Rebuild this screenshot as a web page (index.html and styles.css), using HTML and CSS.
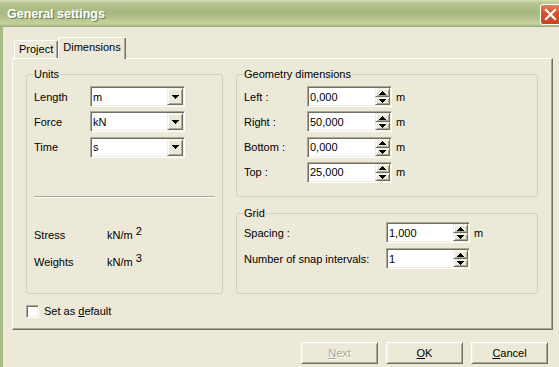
FILE: index.html
```html
<!DOCTYPE html>
<html lang="en">
<head>
    <meta charset="UTF-8">
    <meta name="viewport" content="width=device-width, initial-scale=1.0">
    <title>General settings</title>
    <link rel="stylesheet" href="styles.css">
</head>
<body>
    <div class="window">
        <!-- Title bar -->
        <div class="titlebar">
            <span class="title">General settings</span>
            <span class="close">
                <svg width="19" height="19" viewBox="0 0 19 19">
                    <path d="M5 5 L14 14 M14 5 L5 14" stroke="#fff" stroke-width="2.2" stroke-linecap="square"/>
                </svg>
            </span>
        </div>

        <div class="frame">
            <div class="content">
                <!-- Tabs -->
                <div class="tabs">
                    <div class="tab">Project</div>
                    <div class="tab active">Dimensions</div>
                </div>

                <div class="panel">
                    <div class="columns">
                        <!-- Units -->
                        <div class="group units">
                            <span class="legend">Units</span>
                            <div class="rows">
                                <div class="row">
                                    <span class="lbl lbl-units">Length</span>
                                    <div class="field combo"><span class="val">m</span><span class="btn-drop"><svg width="7" height="4"><polygon points="0,0 7,0 4,4 3,4"/></svg></span></div>
                                </div>
                                <div class="row">
                                    <span class="lbl lbl-units">Force</span>
                                    <div class="field combo"><span class="val">kN</span><span class="btn-drop"><svg width="7" height="4"><polygon points="0,0 7,0 4,4 3,4"/></svg></span></div>
                                </div>
                                <div class="row">
                                    <span class="lbl lbl-units">Time</span>
                                    <div class="field combo"><span class="val">s</span><span class="btn-drop"><svg width="7" height="4"><polygon points="0,0 7,0 4,4 3,4"/></svg></span></div>
                                </div>
                            </div>
                            <div class="sep"></div>
                            <div class="info-row first"><span class="lbl lbl-info">Stress</span><span>kN/m<sup>2</sup></span></div>
                            <div class="info-row"><span class="lbl lbl-info">Weights</span><span>kN/m<sup>3</sup></span></div>
                        </div>

                        <div class="right-col">
                            <!-- Geometry dimensions -->
                            <div class="group geometry">
                                <span class="legend">Geometry dimensions</span>
                                <div class="rows">
                                    <div class="row">
                                        <span class="lbl lbl-geo">Left :</span>
                                        <div class="field spin"><span class="val">0,000</span><span class="spin-btns"><span class="sbtn"><svg width="7" height="4"><polygon points="0,4 7,4 4,0 3,0"/></svg></span><span class="sbtn"><svg width="7" height="4"><polygon points="0,0 7,0 4,4 3,4"/></svg></span></span></div>
                                        <span class="unit">m</span>
                                    </div>
                                    <div class="row">
                                        <span class="lbl lbl-geo">Right :</span>
                                        <div class="field spin"><span class="val">50,000</span><span class="spin-btns"><span class="sbtn"><svg width="7" height="4"><polygon points="0,4 7,4 4,0 3,0"/></svg></span><span class="sbtn"><svg width="7" height="4"><polygon points="0,0 7,0 4,4 3,4"/></svg></span></span></div>
                                        <span class="unit">m</span>
                                    </div>
                                    <div class="row">
                                        <span class="lbl lbl-geo">Bottom :</span>
                                        <div class="field spin"><span class="val">0,000</span><span class="spin-btns"><span class="sbtn"><svg width="7" height="4"><polygon points="0,4 7,4 4,0 3,0"/></svg></span><span class="sbtn"><svg width="7" height="4"><polygon points="0,0 7,0 4,4 3,4"/></svg></span></span></div>
                                        <span class="unit">m</span>
                                    </div>
                                    <div class="row">
                                        <span class="lbl lbl-geo">Top :</span>
                                        <div class="field spin"><span class="val">25,000</span><span class="spin-btns"><span class="sbtn"><svg width="7" height="4"><polygon points="0,4 7,4 4,0 3,0"/></svg></span><span class="sbtn"><svg width="7" height="4"><polygon points="0,0 7,0 4,4 3,4"/></svg></span></span></div>
                                        <span class="unit">m</span>
                                    </div>
                                </div>
                            </div>

                            <!-- Grid -->
                            <div class="group grid">
                                <span class="legend">Grid</span>
                                <div class="rows grid-rows">
                                    <div class="row">
                                        <span class="lbl lbl-grid">Spacing :</span>
                                        <div class="field spin spin-grid"><span class="val">1,000</span><span class="spin-btns"><span class="sbtn"><svg width="7" height="4"><polygon points="0,4 7,4 4,0 3,0"/></svg></span><span class="sbtn"><svg width="7" height="4"><polygon points="0,0 7,0 4,4 3,4"/></svg></span></span></div>
                                        <span class="unit">m</span>
                                    </div>
                                    <div class="row">
                                        <span class="lbl lbl-grid">Number of snap intervals:</span>
                                        <div class="field spin spin-grid"><span class="val">1</span><span class="spin-btns"><span class="sbtn"><svg width="7" height="4"><polygon points="0,4 7,4 4,0 3,0"/></svg></span><span class="sbtn"><svg width="7" height="4"><polygon points="0,0 7,0 4,4 3,4"/></svg></span></span></div>
                                    </div>
                                </div>
                            </div>
                        </div>
                    </div>

                    <label class="check"><span class="box"></span><span>Set as <u>d</u>efault</span></label>
                </div>

                <!-- Dialog buttons -->
                <div class="buttons">
                    <button class="disabled"><u>N</u>ext</button>
                    <button><u>O</u>K</button>
                    <button><u>C</u>ancel</button>
                </div>
            </div>
        </div>
    </div>
</body>
</html>
```

FILE: styles.css
```css
/* Page basics */
body {
    margin: 0;
    width: 559px;
    height: 367px;
    overflow: hidden;
    background: #ECE9D8;
    font-family: "Liberation Sans", Arial, sans-serif;
    font-size: 11px;
    color: #000;
}

/* Window is a bit wider than the viewport, like the cut screenshot */
.window {
    width: 563px;
    height: 367px;
    display: flex;
    flex-direction: column;
}

/* Olive title bar */
.titlebar {
    height: 27px;
    flex: none;
    display: flex;
    align-items: flex-start;
    padding: 0 2px 0 7px;
    background: linear-gradient(to bottom,
        #D9E1BC 0px, #C0CE99 2px, #AFBF89 6px, #A8B880 13px,
        #B2C18B 18px, #C5D19F 23px, #B9C693 25px, #95A56E 27px);
}

.title {
    margin-top: 7px;
    font-size: 12.5px;
    font-weight: bold;
    color: #fff;
    text-shadow: 1px 1px 0 #6E7E48;
}

.close {
    margin-left: auto;
    margin-top: 4px;
    width: 19px;
    height: 19px;
    border: 1px solid #fff;
    border-radius: 3px;
    background: linear-gradient(to bottom, #E4805C, #D6552F 40%, #C4421F);
    display: flex;
}

/* Window frame */
.frame {
    flex: 1;
    display: flex;
    border-left: 3px solid #A9B985;
    border-right: 4px solid #A9B985;
}

.content {
    flex: 1;
    padding: 10px 6px 0 9px;
}

/* Tabs */
.tabs {
    display: flex;
    align-items: flex-end;
    height: 21px;
    padding-left: 2px;
}

.tab {
    height: 18px;
    line-height: 17px;
    padding: 0 4px;
    box-sizing: border-box;
    border-top: 1px solid #fff;
    border-left: 1px solid #fff;
    border-right: 1px solid #716F64;
    border-radius: 2px 2px 0 0;
    box-shadow: inset -1px 0 #ACA899;
    white-space: nowrap;
}

.tab.active {
    height: 22px;
    line-height: 19px;
    margin-bottom: -1px;
    background: #ECE9D8;
    position: relative;
}

/* Tab page */
.panel {
    height: 272px;
    box-sizing: border-box;
    padding: 15px 14px 0 13px;
    border: 1px solid;
    border-color: #fff #716F64 #716F64 #fff;
    box-shadow: inset -1px -1px #ACA899;
}

.columns {
    display: flex;
    gap: 13px;
}

.right-col {
    flex: 1;
    display: flex;
    flex-direction: column;
    gap: 16px;
}

/* Group boxes */
.group {
    box-sizing: border-box;
    border: 1px solid #D0D0BF;
    border-radius: 3px;
    padding: 0 7px;
}

.units { width: 197px; height: 220px; }
.geometry { height: 123px; }
.grid { height: 81px; }

.legend {
    display: table;
    margin: -7px 0 0 -1px;
    padding: 0 1px;
    line-height: 13px;
    background: #ECE9D8;
}

.rows {
    display: flex;
    flex-direction: column;
    gap: 4.33px;
    margin-top: 5px;
}

.grid-rows {
    gap: 5px;
    margin-top: 2px;
}

.row {
    display: flex;
    align-items: center;
    height: 21px;
}

.lbl { flex: none; }
.lbl-units { width: 56px; }
.lbl-geo { width: 63px; }
.lbl-grid { width: 142px; }
.lbl-info { width: 73px; }

/* Sunken edit fields */
.field {
    height: 21px;
    box-sizing: border-box;
    display: flex;
    align-items: center;
    padding: 1px;
    background: #fff;
    border: 1px solid;
    border-color: #ACA899 #fff #fff #ACA899;
    box-shadow: inset 1px 1px #716F64, inset -1px -1px #F1EFE2;
}

.val {
    padding-left: 1px;
    flex: 1;
}

.combo { width: 95px; }
.spin { width: 85px; }
.spin-grid { width: 84px; }

.unit { margin-left: 4px; }

/* Raised little buttons */
.btn-drop,
.sbtn {
    box-sizing: border-box;
    background: #ECE9D8;
    border: 1px solid;
    border-color: #F1EFE2 #716F64 #716F64 #F1EFE2;
    box-shadow: inset 1px 1px #fff, inset -1px -1px #ACA899;
    display: flex;
    align-items: center;
    justify-content: center;
}

.btn-drop {
    width: 16px;
    height: 17px;
}

.spin-btns {
    width: 15px;
    height: 17px;
    display: flex;
    flex-direction: column;
}

.sbtn:first-child { height: 9px; }
.sbtn:last-child { height: 8px; }

svg { display: block; shape-rendering: crispEdges; }
.close svg { shape-rendering: auto; }

/* Separator and info rows */
.sep {
    margin: 38px 0 0 0;
    border-top: 1px solid #ACA899;
    border-bottom: 1px solid #fff;
}

.info-row {
    display: flex;
    line-height: 13px;
    margin-top: 14px;
}

.info-row.first { margin-top: 31px; }

sup {
    font-size: 11px;
    line-height: 0;
    vertical-align: 4px;
    margin-left: 3px;
}

/* Checkbox */
.check {
    display: flex;
    align-items: center;
    gap: 5px;
    margin-top: 11px;
    line-height: 13px;
}

.box {
    width: 13px;
    height: 13px;
    box-sizing: border-box;
    background: #fff;
    border: 1px solid;
    border-color: #ACA899 #fff #fff #ACA899;
    box-shadow: inset 1px 1px #716F64, inset -1px -1px #F1EFE2;
}

/* Dialog buttons */
.buttons {
    display: flex;
    justify-content: flex-end;
    gap: 8px;
    margin-top: 12px;
    padding-right: 5px;
}

button {
    width: 77px;
    height: 22px;
    padding: 0;
    font-family: inherit;
    font-size: 11px;
    color: #000;
    background: #ECE9D8;
    border: 1px solid;
    border-color: #fff #716F64 #716F64 #fff;
    box-shadow: inset 1px 1px #F1EFE2, inset -1px -1px #ACA899;
}

button.disabled {
    color: #ACA899;
    text-shadow: 1px 1px 0 #fff;
}
```
